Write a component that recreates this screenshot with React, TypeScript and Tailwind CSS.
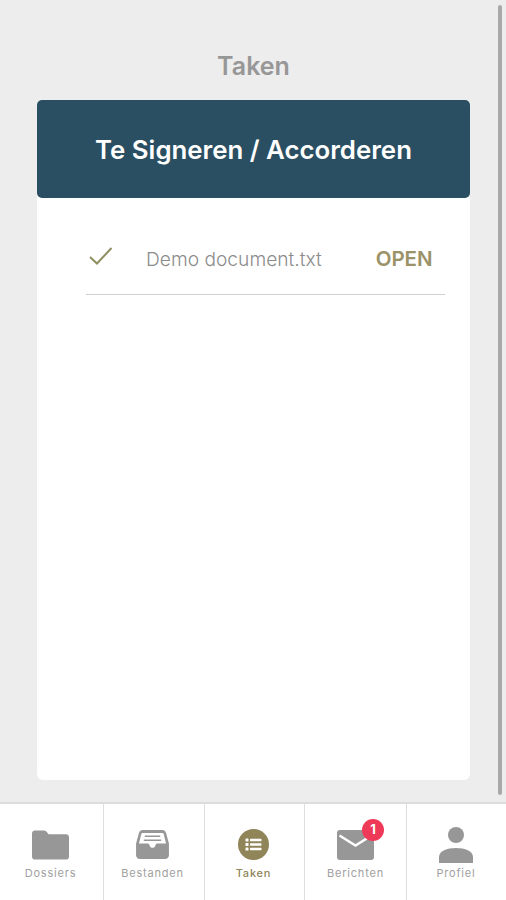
import type { ReactNode } from "react";

const FolderIcon = () => (
  <svg width="37" height="30" viewBox="0 0 38 30">
    <path d="M3 0h9c1.500 0 2.300.6 3 1.500L17 4h18c1.700 0 3 1.300 3 3v20c0 1.700-1.300 3-3 3H3c-1.700 0-3-1.300-3-3V3c0-1.700 1.300-3 3-3z" fill="#979797" />
  </svg>
);

const InboxIcon = () => (
  <svg width="33" height="29" viewBox="0 0 34 30">
    <path d="M7 0h20c2 0 3.500 1.300 4 3l3 11v12c0 2.200-1.800 4-4 4H4c-2.200 0-4-1.800-4-4V14L3 3c.5-1.700 2-3 4-3z" fill="#979797" />
    <path d="M7 3h20c.8 0 1.400.5 1.600 1.200L31 14h-9c-.8 0-1.300.4-1.600 1l-1 2.200c-.4.7-1 1.100-1.800 1.100h-1.200c-.8 0-1.400-.4-1.800-1.100l-1-2.200c-.3-.6-.8-1-1.600-1H3l2.400-9.800C5.600 3.500 6.200 3 7 3z" fill="#fff" />
    <path d="M9 6.500h16M8 10.500h18" stroke="#979797" strokeWidth="1.600" />
  </svg>
);

const ListCircleIcon = () => (
  <svg width="31" height="31" viewBox="0 0 31 31">
    <circle cx="15.500" cy="15.500" r="15.500" fill="#8f8559" />
    <g fill="#fff">
      <rect x="7.500" y="9.500" width="3" height="3" rx="0.600" />
      <rect x="7.500" y="14" width="3" height="3" rx="0.600" />
      <rect x="7.500" y="18.500" width="3" height="3" rx="0.600" />
      <rect x="12" y="9.800" width="11.500" height="2.400" rx="0.600" />
      <rect x="12" y="14.300" width="11.500" height="2.400" rx="0.600" />
      <rect x="12" y="18.800" width="11.500" height="2.400" rx="0.600" />
    </g>
  </svg>
);

const MailIcon = () => (
  <svg width="37" height="30" viewBox="0 0 37 30">
    <rect width="37" height="30" rx="3" fill="#979797" />
    <path d="M2.500 5.500 18.500 15.500 34.500 5.500" fill="none" stroke="#fff" strokeWidth="2.400" />
  </svg>
);

const PersonIcon = () => (
  <svg width="34" height="36" viewBox="0 0 34 36">
    <circle cx="17" cy="8" r="8" fill="#979797" />
    <path d="M0 36v-6c0-6 8-9 17-9s17 3 17 9v6z" fill="#979797" />
  </svg>
);

function Tab({ icon, label, active, className }: { icon: ReactNode; label: string; active?: boolean; className: string }) {
  return (
    <div className={`flex h-full flex-col items-center border-r border-[#dedede] pt-[19px] ${className}`}>
      <div className="flex h-[43px] items-center justify-center">{icon}</div>
      <span className={`text-[11px] leading-[14px] tracking-[0.8px] ${active ? "font-medium text-[#8f8559]" : "text-[#a0a0a0]"}`}>
        {label}
      </span>
    </div>
  );
}

export default function App() {
  return (
    <div className="relative flex h-[900px] w-[506px] flex-col overflow-hidden bg-[#ededed] font-['Inter',sans-serif]">
      <main className="flex min-h-0 flex-1 flex-col pt-[50px] pb-[22px] pl-[37px] pr-[36px]">
        <h1 className="mb-[18px] text-center text-[25px] leading-8 font-semibold text-[#979797]">Taken</h1>
        <section className="flex flex-1 flex-col rounded-[6px] bg-white">
          <div className="flex h-[98px] items-center justify-center rounded-[5px] bg-[#2b4f62] pt-[3px]">
            <h2 className="text-[25.800px] font-semibold text-white">Te Signeren / Accorderen</h2>
          </div>
          <div className="mt-[36px] ml-[49px] mr-[25px] flex h-[61px] items-start border-b border-[#d0d0d0] pt-[12px]">
            <svg width="24" height="18" viewBox="0 0 24 18" className="ml-[3px] mt-[1px]">
              <path d="M1 10 8 16.500 22.500 1" fill="none" stroke="#8f8f62" strokeWidth="2" />
            </svg>
            <span className="ml-[33px] text-[19.200px] leading-[26px] font-light text-[#8c8c8c]">Demo document.txt</span>
            <span className="ml-[54px] text-[20.500px] leading-[26px] font-semibold text-[#9b9268]">OPEN</span>
          </div>
        </section>
      </main>
      <nav className="flex h-[98px] border-t-2 border-[#dcdcdc] bg-white">
        <Tab icon={<FolderIcon />} label="Dossiers" className="w-[104px] pr-[2px]" />
        <Tab icon={<InboxIcon />} label="Bestanden" className="w-[101px] pr-[3px]" />
        <Tab icon={<ListCircleIcon />} label="Taken" active className="w-[100px] pr-[2px]" />
        <Tab
          icon={
            <div className="relative">
              <MailIcon />
              <span className="absolute -top-[11px] -right-[10px] flex h-[22px] w-[22px] items-center justify-center rounded-full bg-[#ee3a58] text-[13px] font-bold text-white">
                1
              </span>
            </div>
          }
          label="Berichten"
          className="w-[102px]"
        />
        <Tab icon={<PersonIcon />} label="Profiel" className="flex-1 border-r-0 pr-[1px]" />
      </nav>
      {/* overlay scrollbar */}
      <div className="absolute top-[5px] left-[498px] h-[790px] w-[4px] rounded-full bg-[#a9a9a9]" />
    </div>
  );
}
